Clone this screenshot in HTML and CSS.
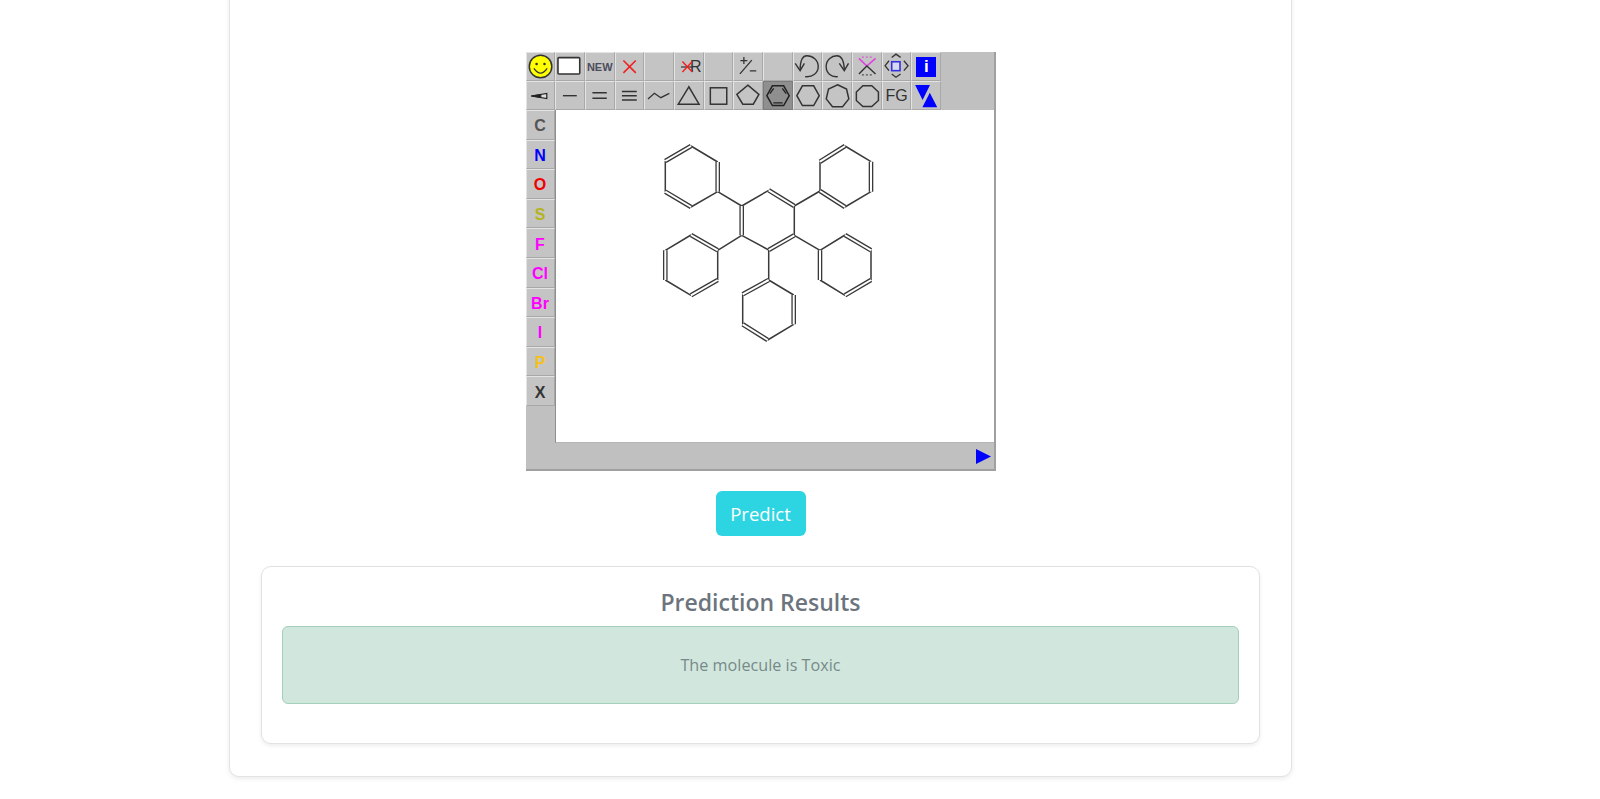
FILE: index.html
```html
<!DOCTYPE html>
<html>
  <head>
    <meta name="viewport" content="width=device-width, initial-scale=1" />
    <title>Toxicity Prediction</title>
    <link rel="stylesheet" href="styles.css">
  </head>
  <body>
    <div class="card">
      <!-- molecule editor -->
      <div class="applet">
        <div class="toolbar">
          <div class="tool">
            <svg viewBox="0 0 30 29"><circle cx="14.7" cy="14.5" r="11.4" fill="#ffff00" stroke="#333" stroke-width="1.5"/><circle cx="10.7" cy="12" r="1.3" fill="#333"/><circle cx="18.7" cy="12" r="1.3" fill="#333"/><path d="M8 16.5 Q14.7 26 21.4 16.5" fill="none" stroke="#333" stroke-width="1.3"/></svg>
          </div>
          <div class="tool">
            <svg viewBox="0 0 30 29"><rect x="3" y="5.5" width="22" height="16.5" rx="1" fill="#fff" stroke="#333" stroke-width="1.6"/></svg>
          </div>
          <div class="tool new-label">NEW</div>
          <div class="tool">
            <svg viewBox="0 0 30 29"><path d="M8.5 8.5 L21 21 M21 8.5 L8.5 21" fill="none" stroke="#f02020" stroke-width="1.6"/></svg>
          </div>
          <div class="tool"></div>
          <div class="tool r-label">
            <span>R</span>
            <svg class="r-mark" viewBox="0 0 30 29"><path d="M7 15 H19" stroke="#333" stroke-width="1.2"/><path d="M8.5 9.5 L18.5 20 M18.5 9.5 L8.5 20" fill="none" stroke="#f02020" stroke-width="1.4"/></svg>
          </div>
          <div class="tool"></div>
          <div class="tool">
            <svg viewBox="0 0 30 29"><path d="M7.5 8.5 H14.5 M11 5 V12 M7 22 L19 8 M17 19 H23.5" fill="none" stroke="#333" stroke-width="1.3"/></svg>
          </div>
          <div class="tool"></div>
          <div class="tool">
            <svg viewBox="0 0 30 29"><path d="M12.2 24.7 C20 25.5 25.5 21 25.5 14.5 C25.5 8 20 3.7 14 3.7 C10 3.7 7.5 7.5 7.2 17" fill="none" stroke="#333" stroke-width="1.4"/><path d="M2.2 11.3 L7.2 18.7 L11.5 11.3" fill="none" stroke="#333" stroke-width="1.4"/></svg>
          </div>
          <div class="tool">
            <svg viewBox="0 0 30 29"><path d="M16 24.7 C9 25.5 4.2 21 4.2 14.5 C4.2 8 9.5 3.7 15 3.7 C19.5 3.7 22 7.5 22.5 17" fill="none" stroke="#333" stroke-width="1.4"/><path d="M26.8 11.3 L22.5 18.7 L17.5 11.3" fill="none" stroke="#333" stroke-width="1.4"/></svg>
          </div>
          <div class="tool">
            <svg viewBox="0 0 30 29"><path d="M7 6.3 L15 14 L23.8 6.3" fill="none" stroke="#e040e0" stroke-width="1.6"/><path d="M7 22 L15 14 L23.8 22" fill="none" stroke="#333" stroke-width="1.4"/><path d="M10 5 H20" stroke="#e040e0" stroke-width="1" stroke-dasharray="2 2"/><path d="M10 23 H20" stroke="#333" stroke-width="1" stroke-dasharray="2 2"/></svg>
          </div>
          <div class="tool">
            <svg viewBox="0 0 30 29"><rect x="9.8" y="9.7" width="8.4" height="9" fill="#d8d8f0" stroke="#3030e0" stroke-width="1.6"/><path d="M7.1 8.7 L3.1 13.7 L7.1 18.7 M22.1 8.7 L26.4 13.7 L22.1 18.7 M9.8 5.3 L14.1 2 L18.8 5.3 M9.8 22 L14.1 25.3 L18.8 22" fill="none" stroke="#333" stroke-width="1.3"/></svg>
          </div>
          <div class="tool info-wrap"><span class="info">i</span></div>

          <div class="tool">
            <svg viewBox="0 0 30 29"><path d="M5.5 15 L21 12.5 V17.5 Z" fill="#ddd" stroke="#222" stroke-width="1.2"/><path d="M5.5 15 L15 13.5 V16.5 Z" fill="#222" stroke="#222"/></svg>
          </div>
          <div class="tool">
            <svg viewBox="0 0 30 29"><path d="M8 14.7 H22" stroke="#333" stroke-width="1.4"/></svg>
          </div>
          <div class="tool">
            <svg viewBox="0 0 30 29"><path d="M7.5 11.7 H22 M7.5 17.3 H22" stroke="#333" stroke-width="1.4"/></svg>
          </div>
          <div class="tool">
            <svg viewBox="0 0 30 29"><path d="M7 10.5 H22 M7 14.7 H22 M7 19 H22" stroke="#333" stroke-width="1.4"/></svg>
          </div>
          <div class="tool">
            <svg viewBox="0 0 30 29"><path d="M4 18 L10.5 12.3 L17 16.7 L25.6 12.3" fill="none" stroke="#333" stroke-width="1.3"/></svg>
          </div>
          <div class="tool">
            <svg viewBox="0 0 30 29"><path d="M15 5.7 L4.3 23.3 H25.3 Z" fill="none" stroke="#333" stroke-width="1.5"/></svg>
          </div>
          <div class="tool">
            <svg viewBox="0 0 30 29"><rect x="6.4" y="6.7" width="16.6" height="16.6" fill="none" stroke="#333" stroke-width="1.5"/></svg>
          </div>
          <div class="tool">
            <svg viewBox="0 0 30 29"><path d="M15 4 L26.2 13.3 L20.5 23.3 H9.9 L3.9 13.3 Z" fill="none" stroke="#333" stroke-width="1.5"/></svg>
          </div>
          <div class="tool selected">
            <svg viewBox="0 0 30 29"><path d="M3.9 14.7 L9.5 4.7 H20.9 L26.5 14.7 L20.9 24.7 H9.5 Z" fill="none" stroke="#222" stroke-width="1.5"/><path d="M7 12.5 L10.8 7.2 M19.5 7.2 L23.4 12.5 M10.5 22 H19.9" fill="none" stroke="#222" stroke-width="1.3"/></svg>
          </div>
          <div class="tool">
            <svg viewBox="0 0 30 29"><path d="M3.9 14.7 L9.5 4.7 H20.9 L26.5 14.7 L20.9 24.7 H9.5 Z" fill="none" stroke="#333" stroke-width="1.5"/></svg>
          </div>
          <div class="tool">
            <svg viewBox="0 0 30 29"><path d="M15.7 3.6 L24.8 8 L27.1 17.9 L20.8 25.8 H10.6 L4.3 17.9 L6.6 8 Z" fill="none" stroke="#333" stroke-width="1.5"/></svg>
          </div>
          <div class="tool">
            <svg viewBox="0 0 30 29"><path d="M11 4.7 H20 L26.7 11 V19.5 L20 25.7 H11 L4.4 19.5 V11 Z" fill="none" stroke="#333" stroke-width="1.5"/></svg>
          </div>
          <div class="tool fg-label">FG</div>
          <div class="tool">
            <svg viewBox="0 0 30 29"><path d="M4.2 4 H19.2 L11.7 19 Z M11.5 26.3 H26.5 L19 11.7 Z" fill="#0000ff"/></svg>
          </div>
        </div>

        <div class="applet-body">
          <div class="atoms">
            <div class="tool atom atom-c">C</div>
            <div class="tool atom atom-n">N</div>
            <div class="tool atom atom-o">O</div>
            <div class="tool atom atom-s">S</div>
            <div class="tool atom atom-hal">F</div>
            <div class="tool atom atom-hal">Cl</div>
            <div class="tool atom atom-hal">Br</div>
            <div class="tool atom atom-hal">I</div>
            <div class="tool atom atom-p">P</div>
            <div class="tool atom atom-x">X</div>
          </div>
          <div class="sheet">
            <div class="canvas">
              <svg class="molecule" viewBox="555 109 438 332">
                <path class="bond" d="M767.7 189.3 L740.7 205 M793.3 205 V234.3 M767.7 249 L740.7 234.3
                  M740.7 205 L716.7 190.7 M793.3 205 L819 190 M740.7 234.3 L716.7 249.3 M793.3 234.3 L819 249.3 M767.7 249 V279
                  M716.7 190.7 L690 206 M690 145 L716.7 161 M664.3 160 V190.7
                  M819 190 V160.7 M844 145 L870 160.7 M870 190.7 L844 206
                  M690 234 L664.3 249.3 M664.3 279 L690 294.3 M716.7 279 V249.3
                  M819 279 L844 294.3 M870 279 V249.3 M844 234 L819 249.3
                  M767.7 279 L792.7 294 M792.7 323.3 L766.7 339 M741.7 323.3 V293.3"/>
                <g>
                  <path class="bond-double" d="M767.7 189.3 L793.3 205 M740.7 205 V234.3 M793.3 234.3 L767.7 249
                    M716.7 161 V190.7 M690 145 L664.3 160 M664.3 190.7 L690 206
                    M819 160.7 L844 145 M870 160.7 V190.7 M844 206 L819 190
                    M716.7 249.3 L690 234 M664.3 249.3 V279 M690 294.3 L716.7 279
                    M819 249.3 V279 M844 294.3 L870 279 M870 249.3 L844 234
                    M767.7 279 L741.7 293.3 M792.7 294 V323.3 M766.7 339 L741.7 323.3"/>
                  <path class="bond-gap" d="M767.7 189.3 L793.3 205 M740.7 205 V234.3 M793.3 234.3 L767.7 249
                    M716.7 161 V190.7 M690 145 L664.3 160 M664.3 190.7 L690 206
                    M819 160.7 L844 145 M870 160.7 V190.7 M844 206 L819 190
                    M716.7 249.3 L690 234 M664.3 249.3 V279 M690 294.3 L716.7 279
                    M819 249.3 V279 M844 294.3 L870 279 M870 249.3 L844 234
                    M767.7 279 L741.7 293.3 M792.7 294 V323.3 M766.7 339 L741.7 323.3"/>
                </g>
              </svg>
            </div>
            <div class="statusbar">
              <svg class="play" viewBox="0 0 15 15"><path d="M0 0 L15 7.5 L0 15 Z" fill="#0000ff"/></svg>
            </div>
          </div>
        </div>
      </div>

      <button type="button" class="predict-btn">Predict</button>

      <div class="results">
        <h2 class="results-title">Prediction Results</h2>
        <div class="alert">The molecule is Toxic</div>
      </div>
    </div>
  </body>
</html>
```

FILE: styles.css
```css
* {
  box-sizing: border-box;
}

html,
body {
  overflow: hidden;
}

body {
  margin: 0;
  height: 799px;
  background-color: #fff;
  font-family: "Open Sans", "Noto Sans", sans-serif;
}

/* Outer card, top edge is scrolled out of view */
.card {
  width: 1063px;
  height: 797px;
  margin: -20px 0 0 229px;
  padding: 71px 32px 0;
  display: flex;
  flex-direction: column;
  align-items: center;
  background-color: #fff;
  border: 1px solid #e3e3e3;
  border-radius: 10px;
  box-shadow: 0 2px 5px rgba(0, 0, 0, 0.08);
}

/* Molecule editor */
.applet {
  width: 470px;
  height: 419px;
  flex-shrink: 0;
  background-color: #c0c0c0;
  border-right: 2px solid #a0a0a0;
  border-bottom: 2px solid #a0a0a0;
  font-family: "Liberation Sans", Arial, sans-serif;
}

.toolbar {
  width: 415.8px;
  display: grid;
  grid-template-columns: repeat(14, 29.7px);
  grid-template-rows: 29px 29px;
}

.tool {
  position: relative;
  display: flex;
  align-items: center;
  justify-content: center;
  background-color: #c4c4c4;
  border-top: 1px solid #e4e4e4;
  border-left: 1px solid #e4e4e4;
  border-right: 1px solid #a8a8a8;
  border-bottom: 1px solid #a8a8a8;
  color: #333;
}

.tool svg {
  position: absolute;
  top: -1px;
  left: -1px;
  width: 29.7px;
  height: 29px;
}

.tool.selected {
  background-color: #8f8f8f;
  border-color: #7c7c7c;
}

.new-label {
  font-size: 11px;
  font-weight: bold;
  color: #4c4c5c;
}

.r-label {
  justify-content: flex-end;
  padding-right: 1px;
  font-size: 16px;
}

.fg-label {
  font-size: 16px;
}

.info {
  width: 20px;
  height: 20px;
  background-color: #0000ff;
  color: #fff;
  font-size: 17px;
  font-weight: bold;
  line-height: 20px;
  text-align: center;
}

.applet-body {
  display: flex;
}

.atoms {
  width: 29px;
  height: 359px;
  flex-shrink: 0;
  display: grid;
  grid-auto-rows: 29.6px;
  align-content: start;
}

.atom {
  padding-top: 3px;
  font-size: 16px;
  font-weight: bold;
}

.atom-c {
  color: #555;
}

.atom-n {
  color: #0000ff;
}

.atom-o {
  color: #f00000;
}

.atom-s {
  color: #b4b41e;
}

.atom-hal {
  color: #ff00ff;
}

.atom-p {
  color: #f5c01e;
}

.atom-x {
  color: #333;
}

.sheet {
  flex: 1;
  display: flex;
  flex-direction: column;
}

.canvas {
  height: 333px;
  background-color: #fff;
  border-left: 1px solid #8e8e8e;
  border-bottom: 1px solid #b4b4b4;
}

.molecule {
  display: block;
  width: 438px;
  height: 332px;
}

.bond,
.bond-double {
  fill: none;
  stroke: #3a3a3a;
}

.bond {
  stroke-width: 1.5;
}

.bond-double {
  stroke-width: 4.6;
}

.bond-gap {
  fill: none;
  stroke: #fff;
  stroke-width: 2;
}

.statusbar {
  height: 26px;
  padding: 6px 3px 0 0;
  display: flex;
  justify-content: flex-end;
}

.play {
  width: 15px;
  height: 15px;
}

/* Predict button */
.predict-btn {
  width: 90px;
  height: 45px;
  margin-top: 20px;
  flex-shrink: 0;
  padding: 0;
  border: none;
  border-radius: 6px;
  background-color: #2dd4e1;
  color: #fff;
  font-family: inherit;
  font-size: 18.5px;
}

/* Results panel */
.results {
  width: 999px;
  height: 178px;
  margin-top: 30px;
  padding: 20px;
  flex-shrink: 0;
  background-color: #fff;
  border: 1px solid #e2e2e2;
  border-radius: 10px;
  box-shadow: 0 2px 4px rgba(0, 0, 0, 0.07);
}

.results-title {
  height: 39px;
  margin: 0;
  color: #6c757d;
  font-size: 23px;
  font-weight: 600;
  line-height: 30px;
  text-align: center;
}

.alert {
  height: 78px;
  padding-top: 27px;
  background-color: #d1e7dd;
  border: 1px solid #a3cfbb;
  border-radius: 6px;
  color: #78898a;
  font-size: 16.2px;
  line-height: 22px;
  text-align: center;
}
```
